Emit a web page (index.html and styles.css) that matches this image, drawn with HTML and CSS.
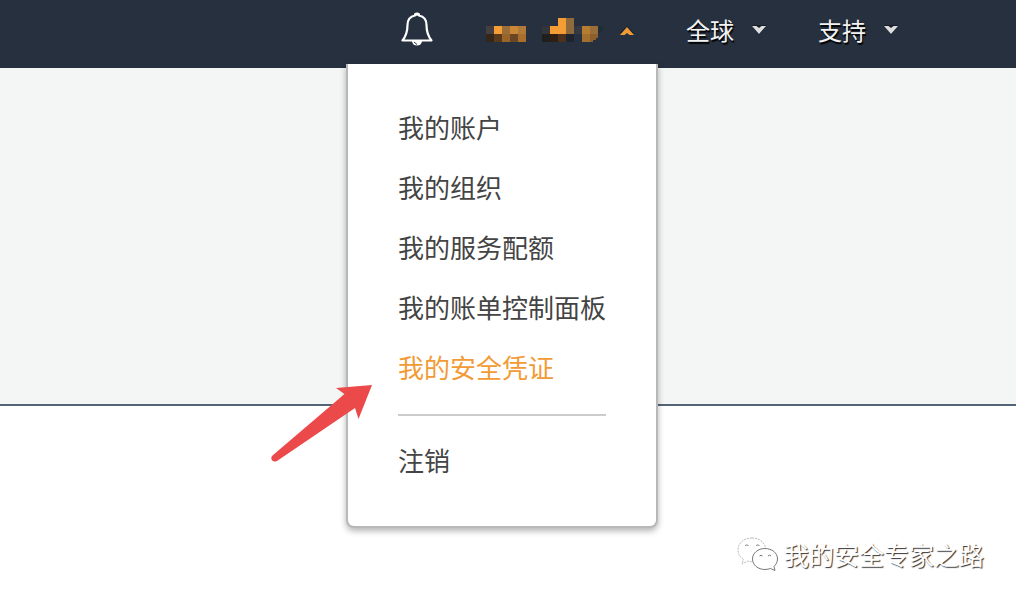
FILE: index.html
```
<!DOCTYPE html>
<html lang="zh-CN">
<head>
<meta charset="utf-8">
<meta name="viewport" content="width=device-width, initial-scale=1">
<title>我的安全凭证</title>
<link rel="stylesheet" href="styles.css">
</head>
<body>
<header class="topbar">
  <button class="bell" type="button" aria-label="通知">
    <svg width="34" height="36" viewBox="0 0 34 36" fill="none">
      <path d="M15 4.500a2 2 0 0 1 4 0C24 5.500 26.500 9 26.500 14c0 7 1 10.500 5 15.500H2.500c4-5 5-8.500 5-15.500 0-5 2.500-8.500 7.500-9.500Z" stroke="#fff" stroke-width="2.200" stroke-linejoin="round"/>
      <path d="M15.500 3.500h3" stroke="#fff" stroke-width="2.500" stroke-linecap="round"/>
      <path d="M12 30h10a5 4.500 0 0 1-10 0Z" fill="#fff"/>
      <path d="m14 31 3 2.500" stroke="#26303f" stroke-width="1"/>
    </svg>
  </button>
  <div class="account">
    <button class="nav-button account-button" type="button" aria-label="账户" aria-expanded="true">
      <svg width="120" height="26" viewBox="0 0 120 26" shape-rendering="crispEdges">
        <path fill="#453f41" d="M1 8h8v8H1z"/>
        <path fill="#f59d35" d="M9 8h8v8H9z"/>
        <path fill="#9b6e39" d="M17 8h8v8h-8z"/>
        <path fill="#ca8837" d="M25 8h8v8h-8z"/>
        <path fill="#b27a39" d="M33 8h8v8h-8z"/>
        <path fill="#35261a" d="M1 16h8v8H1z"/>
        <path fill="#58391c" d="M9 16h8v8H9z"/>
        <path fill="#9b6429" d="M17 16h8v8h-8z"/>
        <path fill="#6b4624" d="M25 16h8v8h-8z"/>
        <path fill="#a86e2d" d="M33 16h8v8h-8z"/>
        <path fill="#343439" d="M57 8h8v8h-8z"/>
        <path fill="#211e1e" d="M57 16h8v8h-8z"/>
        <path fill="#f59d35" d="M65 8h8V0h8v16H65z"/>
        <path fill="#8f6a3d" d="M81 0h8v16h-8z"/>
        <path fill="#2e1f15" d="M65 16h8v8h-8z"/>
        <path fill="#4c321d" d="M73 16h8v8h-8z"/>
        <path fill="#1d2430" d="M81 16h8v8h-8z"/>
        <path fill="#353a42" d="M89 8h8v8h-8z"/>
        <path fill="#b67c32" d="M97 8h8v8h-8z"/>
        <path fill="#9a6e39" d="M105 8h8v8h-8z"/>
        <path fill="#a4702e" d="M97 16h8v8h-8z"/>
        <path fill="#8b602c" d="M105 16h8v4h-2v2h-3v2h-3z"/>
        <path fill="#212d36" d="M113 8h6v4h-2v3h-4z"/>
      </svg>
      <svg width="16" height="10" viewBox="0 0 16 10"><path fill="#171d27" d="M1 7 8 0l7 7z"/><path fill="#f09b38" d="M1 9 8 1l7 8h-4.500L8 7 5.500 9z"/></svg>
    </button>
    <nav class="menu" aria-label="账户菜单">
      <a class="menu-item" href="#">我的账户</a>
      <a class="menu-item" href="#">我的组织</a>
      <a class="menu-item" href="#">我的服务配额</a>
      <a class="menu-item" href="#">我的账单控制面板</a>
      <a class="menu-item active" href="#">我的安全凭证</a>
      <hr class="menu-rule">
      <a class="menu-item" href="#">注销</a>
      <svg class="pointer" width="104" height="82" viewBox="0 0 104 82"><path fill="#ec494b" d="M102 3 66 6l8.500 6L2.500 73.500C-.5 76.500 2.500 81 7 79L85 26l3.500 11Z"/></svg>
    </nav>
  </div>
  <button class="nav-button" type="button"><span>全球</span>
    <svg class="caret" width="16" height="10" viewBox="0 0 16 10"><path fill="#171d27" d="M1 0h14v1L8 10 1 1z"/><path fill="#dedede" d="M1 1h4.500L8 3l2.500-2H15L8 9z"/></svg>
  </button>
  <button class="nav-button" type="button"><span>支持</span>
    <svg class="caret" width="16" height="10" viewBox="0 0 16 10"><path fill="#171d27" d="M1 0h14v1L8 10 1 1z"/><path fill="#dedede" d="M1 1h4.500L8 3l2.500-2H15L8 9z"/></svg>
  </button>
</header>
<main class="hero"></main>
<footer class="watermark">
  <svg width="42" height="36" viewBox="0 0 42 36" fill="#fff" stroke="#777" stroke-width="1">
    <path stroke="#bbb" stroke-dasharray="2 1" d="M15 2C7 2 1 7 1 14c0 4 2 7 5.500 9.500L5 28l6-3c3 1 5 1 7 .5C29 25 31 17 28 10 26 5 21 2 15 2Z"/>
    <path d="M28 12.500c-7 0-12.500 4.500-12.500 10.500S21 33.500 28 33.500c2 0 4-.5 5.500-1l4.500 2-1-4c2-2 3.500-4.500 3.500-7.500 0-6-5.500-10.500-12.500-10.500Z"/>
    <path fill="none" d="M8 10a2 2 0 0 1 3.500 0M19 10a2 2 0 0 1 3.500 0M22.500 20a2 2 0 0 1 3 0M31 20a2 2 0 0 1 3 0"/>
  </svg>
  <span>我的安全专家之路</span>
</footer>
</body>
</html>
```
FILE: styles.css
```
* {
  box-sizing: border-box;
}

body {
  margin: 0;
  min-height: 100vh;
  background: #fff;
  color: #444;
  font-family: "Noto Sans CJK SC", sans-serif;
}

.topbar {
  display: flex;
  justify-content: flex-end;
  align-items: flex-start;
  height: 68px;
  padding: 0 117px;
  background: #26303f;
}

.bell,
.nav-button {
  display: flex;
  align-items: center;
  height: 58px;
  padding: 0;
  border: 0;
  background: none;
  color: #f2f2f2;
  font: inherit;
  font-size: 24px;
  text-shadow: 1px 2px 1px #000;
  cursor: pointer;
}

.nav-button {
  gap: 17px;
  margin-left: 51px;
}

.caret {
  margin-top: 2px;
}

.account {
  position: relative;
}

.account-button {
  gap: 14px;
  height: 62px;
}

.menu {
  position: absolute;
  z-index: 1;
  top: 64px;
  right: -23px;
  padding: 33px 50px 36px;
  border: 2px solid #b8b8b8;
  border-top: 0;
  border-radius: 0 0 8px 8px;
  background: #fff;
  box-shadow: 0 3px 6px rgba(0, 0, 0, 0.3);
}

.menu-item {
  display: block;
  color: #444;
  font-size: 26px;
  line-height: 60px;
  text-decoration: none;
  white-space: nowrap;
}

.menu-item.active {
  color: #f29b36;
}

.menu-rule {
  margin: 17px 0 14px;
  border: 0;
  border-top: 2px solid #ccc;
}

.pointer {
  position: absolute;
  top: 318px;
  left: -78px;
}

.hero {
  height: 338px;
  border-bottom: 2px solid #546478;
  background: #f4f6f6;
}

.watermark {
  position: absolute;
  right: 32px;
  bottom: 28px;
  display: flex;
  align-items: center;
  gap: 5px;
  color: #fff;
  font-size: 25px;
  line-height: 36px;
  text-shadow: 1px 1px 1px #333;
}
```
